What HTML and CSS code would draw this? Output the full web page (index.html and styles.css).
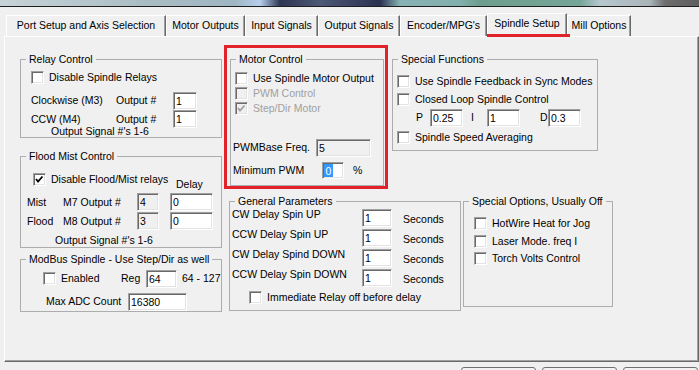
FILE: index.html
```html
<!DOCTYPE html>
<html lang="en">
<head>
  <meta charset="UTF-8" />
  <meta name="viewport" content="width=device-width, initial-scale=1.0"/>
  <title>Spindle Setup</title>
  <link rel="stylesheet" href="styles.css">
</head>
<body>
  <!-- strip of the desktop behind the dialog -->
  <div class="desk"></div>

  <!-- tab strip -->
  <div class="tabs">
    <div class="tab tab-port">Port Setup and Axis Selection</div>
    <div class="tab tab-motor">Motor Outputs</div>
    <div class="tab tab-input">Input Signals</div>
    <div class="tab tab-output">Output Signals</div>
    <div class="tab tab-encoder">Encoder/MPG's</div>
    <div class="tab tab-spindle active">Spindle Setup</div>
    <div class="tab tab-mill">Mill Options</div>
  </div>

  <div class="page">
    <div class="col-left">
      <fieldset class="group relay">
        <legend>Relay Control</legend>
        <div class="row relay-check"><span class="cb"></span>Disable Spindle Relays</div>
        <div class="row relay-line first">
          <span class="relay-name">Clockwise (M3)</span>
          <span class="relay-out">Output #</span>
          <span class="field relay-num">1</span>
        </div>
        <div class="row relay-line second">
          <span class="relay-name">CCW (M4)</span>
          <span class="relay-out">Output #</span>
          <span class="field relay-num">1</span>
        </div>
        <div class="relay-note">Output Signal #'s 1-6</div>
      </fieldset>

      <fieldset class="group flood">
        <legend>Flood Mist Control</legend>
        <div class="row flood-check">
          <span class="check-cell"><span class="cb"><svg width="11" height="11" viewBox="0 0 11 11"><polyline points="2,5 4,7.5 8.5,2.5" /></svg></span>Disable Flood/Mist relays</span>
          <span class="delay">Delay</span>
        </div>
        <div class="row flood-line mist">
          <span class="flood-name">Mist</span>
          <span class="flood-out">M7 Output #</span>
          <span class="field off flood-num">4</span>
          <span class="field flood-delay">0</span>
        </div>
        <div class="row flood-line flood-row">
          <span class="flood-name">Flood</span>
          <span class="flood-out">M8 Output #</span>
          <span class="field off flood-num">3</span>
          <span class="field flood-delay">0</span>
        </div>
        <div class="flood-note">Output Signal #'s 1-6</div>
      </fieldset>

      <fieldset class="group modbus">
        <legend>ModBus Spindle - Use Step/Dir as well</legend>
        <div class="row modbus-line first">
          <span class="modbus-enable"><span class="cb"></span>Enabled</span>
          <span class="modbus-reg">Reg</span>
          <span class="field modbus-num">64</span>
          <span class="modbus-range">64 - 127</span>
        </div>
        <div class="row modbus-line second">
          <span class="modbus-adc-label">Max ADC Count</span>
          <span class="field modbus-adc">16380</span>
        </div>
      </fieldset>
    </div>

    <div class="col-right">
      <div class="top-row">
        <div class="red-box">
          <fieldset class="group motor">
            <legend>Motor Control</legend>
            <div class="row motor-check first"><span class="cb"></span>Use Spindle Motor Output</div>
            <div class="row motor-check off"><span class="cb off"></span>PWM Control</div>
            <div class="row motor-check off"><span class="cb off"><svg width="11" height="11" viewBox="0 0 11 11"><polyline points="2,5 4,7.5 8.5,2.5" /></svg></span>Step/Dir Motor</div>
            <div class="row motor-line freq">
              <span class="motor-freq-label">PWMBase Freq.</span>
              <span class="field off motor-freq">5</span>
            </div>
            <div class="row motor-line min">
              <span class="motor-min-label">Minimum PWM</span>
              <span class="field motor-min"><span class="sel">0</span></span>
              <span class="motor-pct">%</span>
            </div>
          </fieldset>
        </div>

        <fieldset class="group special">
          <legend>Special Functions</legend>
          <div class="row sf-check first"><span class="cb"></span><span class="sf-clip">Use Spindle Feedback in Sync Modes</span></div>
          <div class="row sf-check second"><span class="cb"></span>Closed Loop Spindle Control</div>
          <div class="row pid">
            <span class="pid-p">P</span>
            <span class="field pid-num">0.25</span>
            <span class="pid-i">I</span>
            <span class="field pid-num">1</span>
            <span class="pid-d">D</span>
            <span class="field pid-num">0.3</span>
          </div>
          <div class="row sf-check last"><span class="cb"></span>Spindle Speed Averaging</div>
        </fieldset>
      </div>

      <div class="bottom-row">
        <fieldset class="group general">
          <legend>General Parameters</legend>
          <div class="row gen-line">
            <span class="gen-label">CW Delay Spin UP</span>
            <span class="field gen-num">1</span>
            <span class="gen-unit">Seconds</span>
          </div>
          <div class="row gen-line">
            <span class="gen-label">CCW Delay Spin UP</span>
            <span class="field gen-num">1</span>
            <span class="gen-unit">Seconds</span>
          </div>
          <div class="row gen-line">
            <span class="gen-label">CW Delay Spind DOWN</span>
            <span class="field gen-num">1</span>
            <span class="gen-unit">Seconds</span>
          </div>
          <div class="row gen-line">
            <span class="gen-label">CCW Delay Spin DOWN</span>
            <span class="field gen-num">1</span>
            <span class="gen-unit">Seconds</span>
          </div>
          <div class="row gen-check"><span class="cb"></span>Immediate Relay off before delay</div>
        </fieldset>

        <fieldset class="group options">
          <legend>Special Options, Usually Off</legend>
          <div class="row opt-check first"><span class="cb"></span>HotWire Heat for Jog</div>
          <div class="row opt-check second"><span class="cb"></span>Laser Mode. freq I</div>
          <div class="row opt-check third"><span class="cb"></span>Torch Volts Control</div>
        </fieldset>
      </div>
    </div>
  </div>

  <!-- dialog buttons, cut off by the bottom of the window -->
  <div class="buttons">
    <div class="btn"></div>
    <div class="btn"></div>
    <div class="btn"></div>
  </div>
</body>
</html>
```

FILE: styles.css
```css
* {
  box-sizing: border-box;
}

body {
  margin: 0;
  width: 699px;
  height: 370px;
  overflow: hidden;
  background: #f0f0f0;
  font-family: "Liberation Sans", Arial, sans-serif;
  font-size: 10.5px;
  line-height: 13px;
  color: #000;
}

/* Desktop strip above the window */
.desk {
  height: 7px;
  border-bottom: 1px solid #1e1e1e;
  background: linear-gradient(90deg, #c6d3d7 0, #a9bcc3 150px, #9fb6c2 235px, #b7cfee 260px, #2d3652 280px, #4c5876 320px, #2a3250 380px, #86b2b3 400px, #82b0ae 460px, #6e9e8e 480px, #74a596 580px, #b6c7ce 600px, #a9b4b8 650px, #6d6d6d 665px, #5d5d5d 699px);
}

/* Tabs */
.tabs {
  display: flex;
  align-items: flex-end;
  height: 23px;
  margin-top: 6px;
  padding-left: 6px;
  position: relative;
  z-index: 1;
}

.tab {
  height: 21px;
  padding-top: 3px;
  text-align: center;
  white-space: nowrap;
  border-top: 1px solid #fff;
  border-left: 1px solid #fff;
  border-right: 1px solid #696969;
  box-shadow: inset -1px 0 #a0a0a0;
  background: #f0f0f0;
}

.tab-port { width: 160px; }
.tab-motor { width: 79px; }
.tab-input { width: 73px; }
.tab-output { width: 82px; }
.tab-encoder { width: 87px; }
.tab-spindle { width: 80px; }
.tab-mill { width: 64px; }

.tab.active {
  height: 24px;
  margin-bottom: -1px;
  position: relative;
}

/* red underline drawn over the active tab */
.tab.active::after {
  content: "";
  position: absolute;
  left: -1px;
  right: -4px;
  bottom: 0;
  height: 3px;
  background: #e1222b;
}

/* Tab page */
.page {
  display: flex;
  margin-left: 4px;
  width: 695px;
  height: 326px;
  padding: 8px 0 0 15px;
  border-top: 1px solid #fff;
  border-left: 1px solid #fff;
  border-right: 1px solid #696969;
  border-bottom: 1px solid #696969;
  box-shadow: inset -1px -1px #a0a0a0;
}

.col-left {
  width: 202px;
  padding-top: 8px;
}

.col-right {
  margin-left: 2px;
}

.top-row,
.bottom-row {
  display: flex;
  align-items: flex-start;
}

.bottom-row {
  margin-top: 6px;
}

/* Group boxes */
.group {
  margin: 0;
  padding: 0;
  min-width: 0;
  border: 1px solid #adadad;
}

.group legend {
  margin-left: 5px;
  padding: 0 3px;
  line-height: 13px;
}

.row {
  display: flex;
  align-items: center;
  white-space: nowrap;
}

/* Text boxes */
.field {
  display: block;
  flex: none;
  height: 18px;
  padding: 1px 0 0 2px;
  line-height: 14px;
  background: #fff;
  border: 1px solid;
  border-color: #a0a0a0 #fff #fff #a0a0a0;
  box-shadow: inset 1px 1px #696969, inset -1px -1px #e3e3e3;
}

.field.off {
  background: #f0f0f0;
}

/* Check boxes */
.cb {
  display: block;
  flex: none;
  width: 13px;
  height: 13px;
  margin-right: 5px;
  background: #fff;
  border: 1px solid;
  border-color: #a0a0a0 #fff #fff #a0a0a0;
  box-shadow: inset 1px 1px #696969, inset -1px -1px #e3e3e3;
}

.cb svg {
  display: block;
}

.cb polyline {
  fill: none;
  stroke: #000;
  stroke-width: 1.8;
}

.cb.off {
  background: #f0f0f0;
}

.cb.off polyline {
  stroke: #a0a0a0;
}

/* Relay Control */
.relay-check {
  height: 13px;
  margin-top: 5px;
  padding-left: 10px;
}

.relay-line {
  height: 19px;
}

.relay-line.first {
  margin-top: 7px;
}

.relay-line.second {
  height: 18px;
  margin-top: 0;
}

.relay-name {
  width: 95px;
  padding-left: 10px;
}

.relay-out {
  width: 57px;
}

.relay-num {
  width: 24px;
}

.relay-note {
  height: 12px;
  line-height: 12px;
  margin-top: -3px;
  padding-left: 30px;
}

/* Flood Mist Control */
.flood {
  margin-top: 12px;
}

.flood-check {
  height: 18px;
  margin-top: 10px;
  align-items: flex-start;
}

.check-cell {
  display: flex;
  align-items: center;
  width: 155px;
  height: 13px;
  padding-left: 12px;
}

.delay {
  align-self: flex-end;
}

.flood-line {
  height: 18px;
}

.flood-line.mist {
  margin-top: 2px;
}

.flood-line.flood-row {
  margin-top: 1px;
}

.flood-name {
  width: 42px;
  padding-left: 6px;
}

.flood-out {
  width: 74px;
}

.flood-num {
  width: 22px;
}

.flood-delay {
  width: 43px;
  margin-left: 11px;
}

.flood-note {
  height: 13px;
  margin-top: 4px;
  padding-left: 34px;
}

/* ModBus */
.modbus {
  margin-top: 5px;
}

.modbus-line {
  height: 19px;
}

.modbus-line.first {
  margin-top: 3px;
}

.modbus-line.second {
  margin-top: 4px;
}

.modbus-enable {
  display: flex;
  align-items: center;
  width: 100px;
  padding-left: 22px;
}

.modbus-reg {
  width: 25px;
}

.modbus-num {
  width: 31px;
}

.modbus-range {
  margin-left: 5px;
}

.modbus-adc-label {
  width: 107px;
  padding-left: 25px;
}

.modbus-adc {
  width: 59px;
}

/* Motor Control, boxed in red */
.red-box {
  width: 164px;
  height: 144px;
  padding: 5px 1px 0 3px;
  border: 3px solid #e1222b;
}

.motor {
  padding-bottom: 6px;
}

.motor-check {
  height: 15px;
  padding-left: 4px;
}

.motor-check.first {
  margin-top: 5px;
}

.motor-check.off {
  color: #a0a0a0;
}

.motor-line.freq {
  height: 19px;
  margin-top: 22px;
}

.motor-line.min {
  height: 18px;
  margin-top: 4px;
}

.motor-freq-label {
  width: 85px;
  padding-left: 2px;
}

.motor-freq {
  width: 55px;
}

.motor-min-label {
  width: 91px;
  padding-left: 2px;
}

.motor-min {
  width: 22px;
  height: 17px;
  padding: 1px 0 0 1px;
}

.sel {
  display: block;
  width: 9px;
  height: 13px;
  background: #3399ff;
  color: #fff;
  text-align: center;
}

.motor-pct {
  margin-left: 9px;
}

/* Special Functions */
.special {
  width: 206px;
  margin-left: 4px;
  margin-top: 8px;
  padding-bottom: 6px;
}

.sf-check {
  height: 13px;
  padding-left: 4px;
}

.sf-check.first {
  margin-top: 9px;
}

.sf-check.second {
  margin-top: 5px;
}

.sf-check.last {
  margin-top: 4px;
}

.sf-clip {
  width: 180px;
  overflow: hidden;
}

.pid {
  height: 19px;
  margin-top: 2px;
}

.pid-p {
  width: 37px;
  padding-left: 23px;
}

.pid-num {
  width: 33px;
}

.pid-i {
  width: 24px;
  padding-left: 8px;
}

.pid-d {
  width: 28px;
  padding-left: 20px;
}

/* General Parameters */
.general {
  width: 232px;
  margin-left: 5px;
  padding-bottom: 6px;
}

.gen-line {
  height: 20px;
  align-items: flex-start;
}

.gen-label {
  width: 132px;
  padding-left: 2px;
}

.gen-num {
  width: 30px;
  margin-top: 1px;
}

.gen-unit {
  margin-left: 11px;
  margin-top: 5px;
}

.gen-check {
  height: 13px;
  margin-top: 3px;
  padding-left: 19px;
}

/* Special Options */
.options {
  width: 150px;
  margin-left: 2px;
  padding-bottom: 41px;
}

.opt-check {
  height: 13px;
  padding-left: 10px;
}

.opt-check.first {
  margin-top: 9px;
}

.opt-check.second {
  margin-top: 5px;
}

.opt-check.third {
  margin-top: 4px;
}

/* Dialog buttons, only their top edge is in the window */
.buttons {
  display: flex;
  justify-content: flex-end;
  gap: 6px;
  height: 3px;
  margin-top: 5px;
  padding-right: 1px;
  overflow: hidden;
}

.btn {
  flex: none;
  width: 75px;
  height: 23px;
  border: 1px solid #707070;
  border-radius: 3px;
  background: linear-gradient(#f2f2f2, #ebebeb 50%, #dddddd 50%, #cfcfcf);
}
```
